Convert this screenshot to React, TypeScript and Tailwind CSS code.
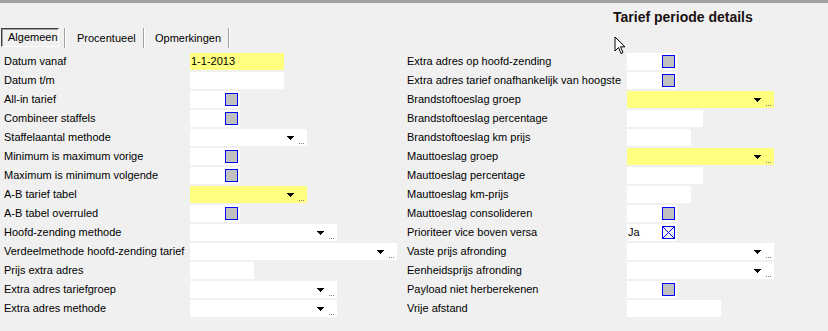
import React from "react";

type Field =
  | { kind: "text"; w: number; value?: string; yellow?: boolean }
  | { kind: "check"; checked?: boolean; text?: string }
  | { kind: "drop"; w: number; yellow?: boolean };

type Row = { label: string; field: Field };

const leftRows: Row[] = [
  { label: "Datum vanaf", field: { kind: "text", w: 94, value: "1-1-2013", yellow: true } },
  { label: "Datum t/m", field: { kind: "text", w: 94 } },
  { label: "All-in tarief", field: { kind: "check" } },
  { label: "Combineer staffels", field: { kind: "check" } },
  { label: "Staffelaantal methode", field: { kind: "drop", w: 117 } },
  { label: "Minimum is maximum vorige", field: { kind: "check" } },
  { label: "Maximum is minimum volgende", field: { kind: "check" } },
  { label: "A-B tarief tabel", field: { kind: "drop", w: 117, yellow: true } },
  { label: "A-B tabel overruled", field: { kind: "check" } },
  { label: "Hoofd-zending methode", field: { kind: "drop", w: 147 } },
  { label: "Verdeelmethode hoofd-zending tarief", field: { kind: "drop", w: 207 } },
  { label: "Prijs extra adres", field: { kind: "text", w: 64 } },
  { label: "Extra adres tariefgroep", field: { kind: "drop", w: 147 } },
  { label: "Extra adres methode", field: { kind: "drop", w: 147 } },
];

const rightRows: Row[] = [
  { label: "Extra adres op hoofd-zending", field: { kind: "check" } },
  { label: "Extra adres tarief onafhankelijk van hoogste", field: { kind: "check" } },
  { label: "Brandstoftoeslag groep", field: { kind: "drop", w: 147, yellow: true } },
  { label: "Brandstoftoeslag percentage", field: { kind: "text", w: 76 } },
  { label: "Brandstoftoeslag km prijs", field: { kind: "text", w: 64 } },
  { label: "Mauttoeslag groep", field: { kind: "drop", w: 147, yellow: true } },
  { label: "Mauttoeslag percentage", field: { kind: "text", w: 76 } },
  { label: "Mauttoeslag km-prijs", field: { kind: "text", w: 64 } },
  { label: "Mauttoeslag consolideren", field: { kind: "check" } },
  { label: "Prioriteer vice boven versa", field: { kind: "check", checked: true, text: "Ja" } },
  { label: "Vaste prijs afronding", field: { kind: "drop", w: 147 } },
  { label: "Eenheidsprijs afronding", field: { kind: "drop", w: 147 } },
  { label: "Payload niet herberekenen", field: { kind: "check" } },
  { label: "Vrije afstand", field: { kind: "text", w: 94 } },
];

export default function App() {
  return (
    <div className="relative w-[828px] h-[331px] overflow-hidden bg-[#f0f0f0] text-[11px] leading-[17px] text-black font-['Liberation_Sans',Arial,sans-serif]">
      {/* top strip */}
      <div className="h-[3px] bg-[#a0a0a4]" />

      {/* title */}
      <div className="h-[24px] pl-[613px] pt-[6px]">
        <span className="text-[14px] leading-[16px] font-bold text-[#1a1010]">
          Tarief periode details
        </span>
      </div>

      {/* tabs */}
      <div className="flex items-stretch h-[21px] pt-[1px] pl-[1px]">
        <div className="flex items-center w-[58px] pl-[6px] h-[19px] border border-t-[#404040] border-l-[#404040] border-b-white border-r-white bg-[#f0f0f0] shadow-[inset_1px_1px_0_#a0a0a0]">
          Algemeen
        </div>
        <div className="w-[5px]" />
        <TabSep />
        <div className="flex items-center w-[77px] pl-[11px]">Procentueel</div>
        <TabSep />
        <div className="flex items-center w-[83px] pl-[10px]">Opmerkingen</div>
        <TabSep />
      </div>

      {/* form */}
      <div className="flex mt-[5px]">
        <div className="w-[397px] shrink-0">
          <Column rows={leftRows} labelW={190} offset={4} />
        </div>
        <Column rows={rightRows} labelW={230} offset={10} />
      </div>

      {/* mouse pointer */}
      <svg
        className="absolute left-[614px] top-[36px]"
        width="14"
        height="20"
        viewBox="0 0 14 20"
      >
        <path
          d="M1 1 L1 15 L4.5 11.5 L7 17.5 L9 16.5 L6.5 10.8 L11 10.8 Z"
          fill="white"
          stroke="black"
          strokeWidth="1"
          strokeLinejoin="miter"
        />
      </svg>
    </div>
  );
}

function TabSep() {
  return (
    <div className="flex items-center h-[20px]">
      <div className="w-[1px] h-[20px] bg-[#a0a0a0]" />
      <div className="w-[1px] h-[20px] bg-white" />
    </div>
  );
}

function Column({ rows, labelW, offset }: { rows: Row[]; labelW: number; offset: number }) {
  return (
    <div className="flex flex-col gap-[2px]" style={{ paddingLeft: offset }}>
      {rows.map((r) => (
        <div key={r.label} className="flex h-[17px] items-center">
          <div className="shrink-0 whitespace-nowrap" style={{ width: labelW - offset }}>
            {r.label}
          </div>
          <FieldBox f={r.field} />
        </div>
      ))}
    </div>
  );
}

function FieldBox({ f }: { f: Field }) {
  if (f.kind === "check") {
    return (
      <div className="relative w-[50px] h-[17px] bg-white">
        {f.text && <span className="absolute left-[1px] top-0">{f.text}</span>}
        <div className="absolute left-[35px] top-[2px] w-[13px] h-[13px] border border-[#0000ff] bg-[#c0c0c0]">
          {f.checked && (
            <svg width="11" height="11" viewBox="0 0 11 11" className="block bg-[#f4f4f4]">
              <path d="M0 0 L11 11 M11 0 L0 11" stroke="#0000ff" strokeWidth="1" />
            </svg>
          )}
        </div>
      </div>
    );
  }
  const bg = f.yellow ? "bg-[#ffff80]" : "bg-white";
  if (f.kind === "text") {
    return (
      <div className={`h-[17px] pl-[1px] ${bg}`} style={{ width: f.w }}>
        {f.value}
      </div>
    );
  }
  return (
    <div className={`relative h-[17px] ${bg}`} style={{ width: f.w }}>
      <svg className="absolute top-[7px]" style={{ left: f.w - 20 }} width="7" height="4" viewBox="0 0 7 4">
        <path d="M0 0 H7 V1 H6 V2 H5 V3 H4 V4 H3 V3 H2 V2 H1 V1 H0 Z" fill="black" />
      </svg>
      <svg className="absolute top-[14px]" style={{ left: f.w - 8 }} width="6" height="1" viewBox="0 0 6 1">
        <rect x="0" y="0" width="1" height="1" fill="#808080" />
        <rect x="2" y="0" width="1" height="1" fill="#808080" />
        <rect x="4" y="0" width="1" height="1" fill="#808080" />
      </svg>
    </div>
  );
}
